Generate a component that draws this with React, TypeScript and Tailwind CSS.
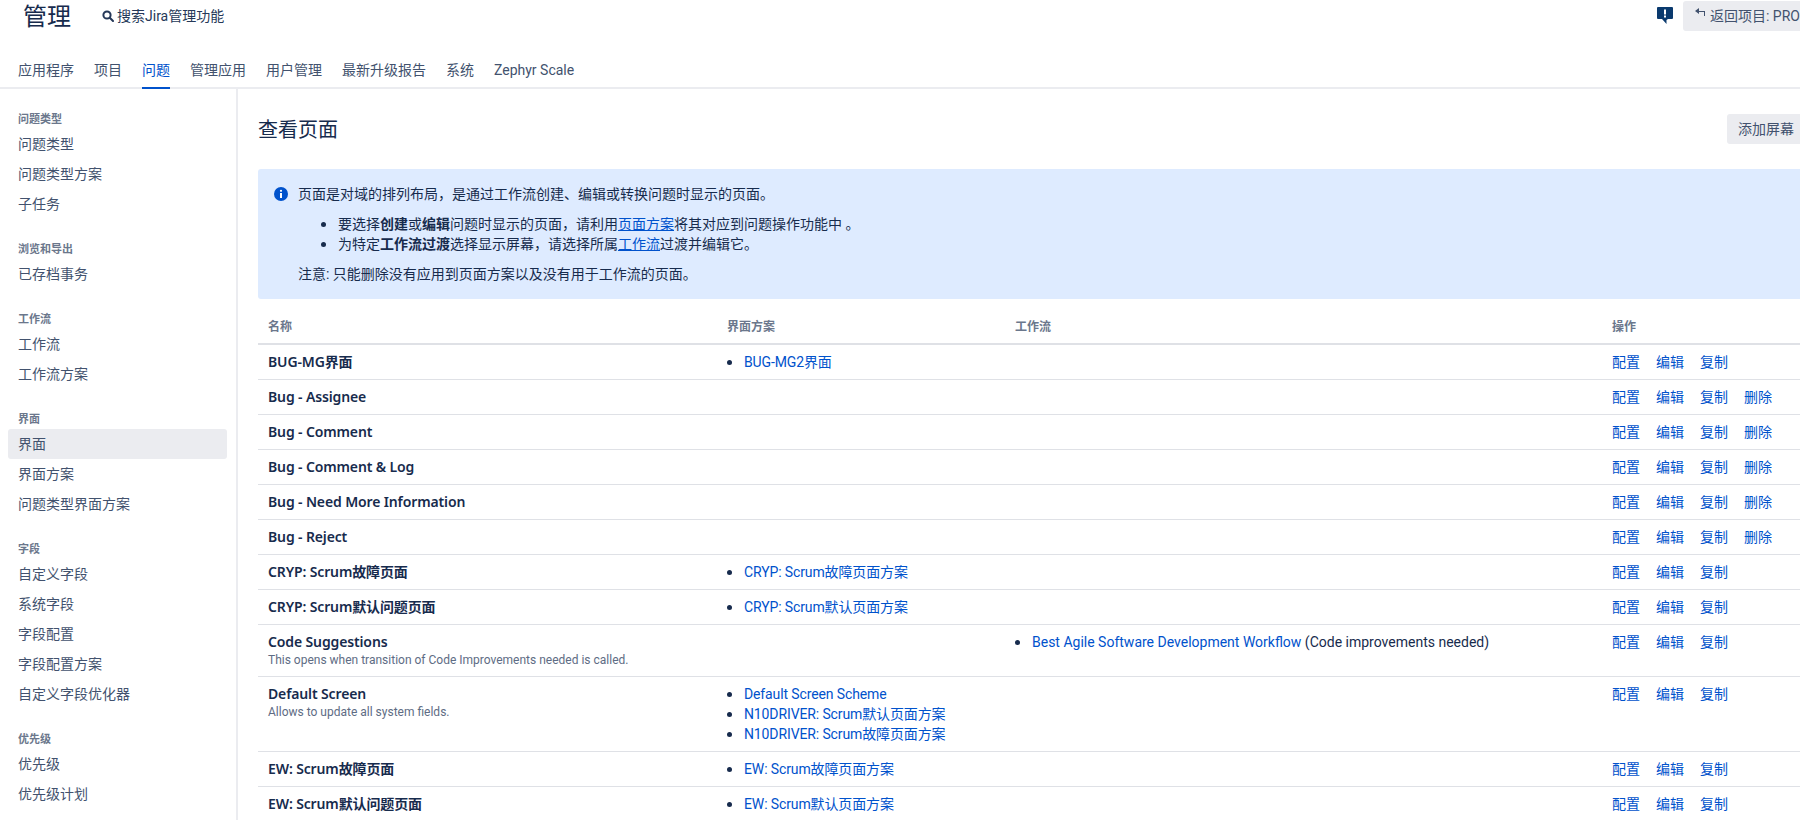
const font = "font-['Roboto','Noto_Sans_CJK_SC',sans-serif]";
const boldFont = "font-['Noto_Sans','Noto_Sans_CJK_SC',sans-serif]";

const tabs = ["应用程序", "项目", "问题", "管理应用", "用户管理", "最新升级报告", "系统", "Zephyr Scale"];

const sections: { title: string; items: string[] }[] = [
  { title: "问题类型", items: ["问题类型", "问题类型方案", "子任务"] },
  { title: "浏览和导出", items: ["已存档事务"] },
  { title: "工作流", items: ["工作流", "工作流方案"] },
  { title: "界面", items: ["界面", "界面方案", "问题类型界面方案"] },
  { title: "字段", items: ["自定义字段", "系统字段", "字段配置", "字段配置方案", "自定义字段优化器"] },
  { title: "优先级", items: ["优先级", "优先级计划"] },
];

type Row = {
  name: string;
  desc?: string;
  schemes?: string[];
  workflow?: boolean;
  del?: boolean;
};

const rows: Row[] = [
  { name: "BUG-MG界面", schemes: ["BUG-MG2界面"] },
  { name: "Bug - Assignee", del: true },
  { name: "Bug - Comment", del: true },
  { name: "Bug - Comment & Log", del: true },
  { name: "Bug - Need More Information", del: true },
  { name: "Bug - Reject", del: true },
  { name: "CRYP: Scrum故障页面", schemes: ["CRYP: Scrum故障页面方案"] },
  { name: "CRYP: Scrum默认问题页面", schemes: ["CRYP: Scrum默认页面方案"] },
  { name: "Code Suggestions", desc: "This opens when transition of Code Improvements needed is called.", workflow: true },
  {
    name: "Default Screen",
    desc: "Allows to update all system fields.",
    schemes: ["Default Screen Scheme", "N10DRIVER: Scrum默认页面方案", "N10DRIVER: Scrum故障页面方案"],
  },
  { name: "EW: Scrum故障页面", schemes: ["EW: Scrum故障页面方案"] },
  { name: "EW: Scrum默认问题页面", schemes: ["EW: Scrum默认页面方案"] },
];

function Bullet({ children }: { children: React.ReactNode }) {
  return (
    <li className="flex h-5 items-center">
      <span className="mr-[12px] h-[5px] w-[5px] shrink-0 rounded-full bg-[#172b4d]" />
      <span>{children}</span>
    </li>
  );
}

export default function App() {
  return (
    <div className={`${font} h-[820px] w-[1800px] overflow-hidden bg-white text-sm leading-5 text-[#172b4d]`}>
      <header className="h-[89px] border-b-2 border-[#ebecf0]">
        <div className="flex h-[52px] items-start">
          <h1 className="ml-[23px] mt-[3px] text-2xl leading-7">管理</h1>
          <div className="ml-[31px] mt-[6px] flex h-5 items-center gap-[3px] text-[#253858]">
            <svg width="12" height="12" viewBox="0 0 12 12" fill="none" stroke="#253858" strokeWidth="2">
              <circle cx="5" cy="5" r="3.6" />
              <path d="M7.8 7.8 11 11" strokeLinecap="round" />
            </svg>
            <span>搜索Jira管理功能</span>
          </div>
          <div className="ml-auto flex items-start">
            <svg className="mt-[7px]" width="16" height="17" viewBox="0 0 16 17">
              <path d="M1 0h14a1 1 0 0 1 1 1v10a1 1 0 0 1-1 1h-4L9.500 13v4L5 12H1a1 1 0 0 1-1-1V1a1 1 0 0 1 1-1Z" fill="#0a3a6e" />
              <rect x="7" y="2.500" width="2" height="5" fill="#fff" />
              <rect x="7" y="8.500" width="2" height="2" fill="#fff" />
            </svg>
            <div className="ml-[10px] mt-px flex h-[30px] w-[117px] items-center overflow-hidden whitespace-nowrap rounded-l-[3px] bg-[#ebecf0] pl-3 text-[#42526e]">
              <svg className="mb-[9px] mr-[5px] shrink-0" width="10" height="8" viewBox="0 0 10 8" fill="#42526e">
                <path d="M4 0 0 3l4 3V4h5v4h1V3H4V0Z" />
              </svg>
              <span>返回项目: PROJECT</span>
            </div>
          </div>
        </div>
        <nav className="-mb-[2px] flex h-[37px] gap-5 pl-[18px]">
          {tabs.map((t) => (
            <a
              key={t}
              className={`flex h-[37px] items-center border-b-2 pt-px ${
                t === "问题" ? "border-[#0052cc] text-[#0052cc]" : "border-transparent text-[#42526e]"
              }`}
            >
              {t}
            </a>
          ))}
        </nav>
      </header>

      <div className="flex h-[731px]">
        <aside className="w-[238px] shrink-0 border-r-2 border-[#ebecf0] pt-[22px]">
          {sections.map((s) => (
            <section key={s.title} className="mb-[22px]">
              <h2 className="mb-[2px] flex h-4 items-center pl-[18px] pt-[2px] text-[11px] font-semibold text-[#6b778c]">{s.title}</h2>
              {s.items.map((i) => (
                <a
                  key={i}
                  className={`ml-2 flex h-[30px] w-[219px] items-center rounded-[3px] px-[10px] text-[#42526e] ${
                    s.title === "界面" && i === "界面" ? "bg-[#ebecf0]" : ""
                  }`}
                >
                  {i}
                </a>
              ))}
            </section>
          ))}
        </aside>

        <main className="w-[1562px] shrink-0 pl-5">
          <div className="flex h-[80px] items-start justify-between pt-[25px]">
            <h2 className="mt-[4px] text-xl leading-6">查看页面</h2>
            <button className="h-[30px] w-[73px] overflow-hidden whitespace-nowrap rounded-l-[3px] bg-[#ebecf0] pl-[11px] text-left text-[#42526e]">
              添加屏幕
            </button>
          </div>

          <div className="flex h-[130px] rounded-l-[3px] bg-[#deebff] pl-4 pt-[15px]">
            <svg className="mt-[3px] shrink-0" width="14" height="14" viewBox="0 0 14 14">
              <circle cx="7" cy="7" r="7" fill="#0052cc" />
              <rect x="6" y="6" width="2" height="5" fill="#fff" />
              <circle cx="7" cy="3.800" r="1.100" fill="#fff" />
            </svg>
            <div className="ml-[10px]">
              <p>页面是对域的排列布局，是通过工作流创建、编辑或转换问题时显示的页面。</p>
              <ul className="mt-[10px] pl-[23px]">
                <Bullet>
                  要选择<b>创建</b>或<b>编辑</b>问题时显示的页面，请利用<a className="text-[#0052cc] underline">页面方案</a>将其对应到问题操作功能中 。
                </Bullet>
                <Bullet>
                  为特定<b>工作流过渡</b>选择显示屏幕，请选择所属<a className="text-[#0052cc] underline">工作流</a>过渡并编辑它。
                </Bullet>
              </ul>
              <p className="mt-[10px]">注意: 只能删除没有应用到页面方案以及没有用于工作流的页面。</p>
            </div>
          </div>

          <table className="w-[1542px] table-fixed border-collapse">
            <thead>
              <tr className="border-b-2 border-[#dfe1e6] text-left text-xs font-semibold text-[#6b778c]">
                <th className="h-[45px] w-[459px] pl-[10px] pt-[11px] font-semibold">名称</th>
                <th className="w-[288px] pl-[10px] pt-[11px] font-semibold">界面方案</th>
                <th className="w-[597px] pl-[10px] pt-[11px] font-semibold">工作流</th>
                <th className="pl-[10px] pt-[11px] font-semibold">操作</th>
              </tr>
            </thead>
            <tbody>
              {rows.map((r) => (
                <tr key={r.name} className="border-b border-[#dfe1e6] align-top">
                  <td className="py-[7px] pl-[10px]">
                    <div className={`${boldFont} font-semibold tracking-[-0.13px]`}>{r.name}</div>
                    {r.desc && <div className="text-xs leading-[17px] text-[#5e6c84]">{r.desc}</div>}
                  </td>
                  <td className="py-[7px] pl-[10px]">
                    {r.schemes && (
                      <ul className="tracking-[-0.12px] text-[#0052cc]">
                        {r.schemes.map((s) => (
                          <Bullet key={s}>{s}</Bullet>
                        ))}
                      </ul>
                    )}
                  </td>
                  <td className="py-[7px] pl-[10px]">
                    {r.workflow && (
                      <ul>
                        <Bullet>
                          <a className="text-[#0052cc]">Best Agile Software Development Workflow</a> (Code improvements needed)
                        </Bullet>
                      </ul>
                    )}
                  </td>
                  <td className="py-[7px] pl-[10px]">
                    <div className="flex gap-4 text-[#0052cc]">
                      <a>配置</a>
                      <a>编辑</a>
                      <a>复制</a>
                      {r.del && <a>删除</a>}
                    </div>
                  </td>
                </tr>
              ))}
            </tbody>
          </table>
        </main>
      </div>
    </div>
  );
}
